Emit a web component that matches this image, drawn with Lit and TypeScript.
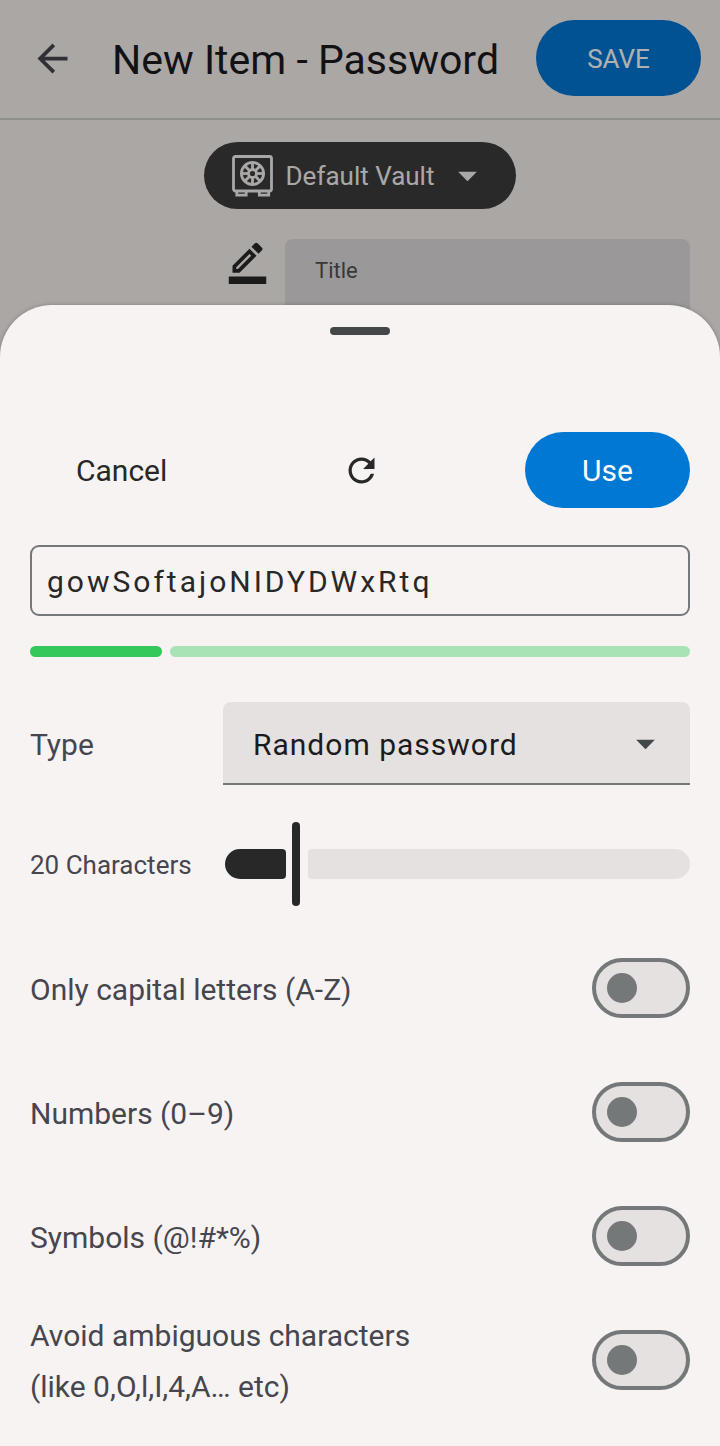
import { LitElement, html, css, svg } from "lit";
import { customElement, state } from "lit/decorators.js";

const caret = svg`<path d="M7 10l5 5 5-5z" />`;
const spokes = [0, 45, 90, 135, 180, 225, 270, 315];

interface Option {
  id: string;
  lines: string[];
}

const options: Option[] = [
  { id: "capitals", lines: ["Only capital letters (A-Z)"] },
  { id: "numbers", lines: ["Numbers (0–9)"] },
  { id: "symbols", lines: ["Symbols (@!#*%)"] },
  { id: "ambiguous", lines: ["Avoid ambiguous characters", "(like 0,O,l,I,4,A… etc)"] },
];

@customElement("new-item-page")
class NewItemPage extends LitElement {
  static styles = css`
    :host {
      display: block;
      background: #f8f2f0;
      color: #1b1b1f;
    }
    button,
    input {
      font: inherit;
      color: inherit;
      border: 0;
      margin: 0;
      padding: 0;
    }
    .bar {
      display: flex;
      align-items: center;
      height: 116px;
      padding: 0 19px 2px 30px;
      border-bottom: 2px solid #d0d1ce;
    }
    .back {
      display: flex;
      background: none;
      color: #46464f;
    }
    .icon {
      width: 45px;
      height: 45px;
      fill: currentColor;
      flex: none;
    }
    .heading {
      flex: 1;
      margin: 0;
      padding: 4px 0 0 37px;
      font-size: 41px;
      line-height: 48px;
      font-weight: 400;
      white-space: nowrap;
    }
    .save {
      width: 165px;
      height: 76px;
      border-radius: 38px;
      background: #0078d4;
      color: #fff;
      font-size: 26px;
      padding-top: 2px;
    }
    .vault {
      display: flex;
      align-items: center;
      width: fit-content;
      height: 67px;
      margin: 22px auto 30px;
      padding: 0 26px 0 28px;
      border-radius: 34px;
      background: #3c3c3c;
      color: #f7f3f1;
      font-size: 26px;
    }
    .safe {
      width: 41px;
      height: 42px;
      margin-right: 13px;
      fill: none;
      stroke: currentColor;
      stroke-width: 2.8;
    }
    .vault .icon {
      margin-left: 11px;
    }
    .row {
      display: flex;
      align-items: flex-start;
      gap: 15px;
      padding: 0 30px 0 225px;
    }
    .edit {
      color: #282828;
    }
    .title {
      flex: 1;
      min-width: 0;
      height: 105px;
      padding: 0 30px 42px;
      box-sizing: border-box;
      border-radius: 8px 8px 0 0;
      background: #e0dddd;
      font-size: 22px;
    }
    .title::placeholder {
      color: #4f5253;
      opacity: 1;
    }
  `;

  render() {
    return html`
      <header class="bar">
        <button class="back" aria-label="Back">
          <svg class="icon" viewBox="0 0 24 24">
            <path d="M20 11H7.83l5.59-5.59L12 4l-8 8 8 8 1.41-1.41L7.83 13H20v-2z" />
          </svg>
        </button>
        <h1 class="heading">New Item - Password</h1>
        <button class="save">SAVE</button>
      </header>
      <button class="vault">
        <svg class="safe" viewBox="0 0 41 42" aria-hidden="true">
          <rect x="1.5" y="1.5" width="38" height="34.5" rx="2" />
          <path d="M4.8 36v4.2h9.4V36M27.3 36v4.2h9.4V36" />
          <circle cx="20.5" cy="18.5" r="11.1" />
          <circle cx="20.5" cy="18.5" r="4" />
          ${spokes.map(
            (a) => svg`<path d="M20.5 14.5V7.5" transform="rotate(${a} 20.5 18.5)" />`
          )}
        </svg>
        Default Vault
        <svg class="icon" viewBox="0 0 24 24" aria-hidden="true">${caret}</svg>
      </button>
      <div class="row">
        <svg class="icon edit" viewBox="0 0 24 24" aria-hidden="true">
          <path
            d="M16.81 8.94l-3.75-3.75L4 14.25V18h3.75l9.06-9.06zM6 16v-.92l7.06-7.06.92.92L6.92 16H6zm13.71-9.96c.39-.39.39-1.02 0-1.41l-2.34-2.34c-.39-.39-1.02-.39-1.41 0l-1.83 1.83 3.75 3.75 1.83-1.83zM2 20h20v4H2z"
          />
        </svg>
        <input class="title" type="text" placeholder="Title" aria-label="Title" />
      </div>
    `;
  }
}

@customElement("password-sheet")
class PasswordSheet extends LitElement {
  @state() private length = 20;
  private readonly min = 8;
  private readonly max = 90;

  static styles = css`
    :host {
      display: block;
      box-sizing: border-box;
      padding: 22px 30px 24px;
      border-radius: 52px 52px 0 0;
      background: #f7f3f2;
      box-shadow: 0 0 4px rgba(0, 0, 0, 0.25);
      color: #282828;
      font-size: 30px;
    }
    button,
    input,
    select {
      font: inherit;
      color: inherit;
      border: 0;
      margin: 0;
      padding: 0;
    }
    .handle {
      width: 60px;
      height: 8px;
      margin: 0 auto 97px;
      border-radius: 4px;
      background: #444748;
    }
    .actions {
      display: grid;
      grid-template-columns: 1fr auto 1fr;
      align-items: center;
      margin-bottom: 37px;
    }
    .cancel {
      justify-self: start;
      height: 76px;
      padding: 0 46px;
      background: none;
    }
    .refresh {
      display: flex;
      padding-left: 3px;
      background: none;
    }
    .refresh svg {
      width: 39px;
      height: 39px;
      fill: currentColor;
    }
    .use {
      justify-self: end;
      width: 165px;
      height: 76px;
      border-radius: 38px;
      background: #0078d4;
      color: #fff;
    }
    .password {
      display: block;
      box-sizing: border-box;
      width: 100%;
      height: 71px;
      padding: 2px 15px 0;
      border: 2px solid #747878;
      border-radius: 9px;
      background: none;
      letter-spacing: 3px;
    }
    .strength {
      display: grid;
      grid-template-columns: 20% 1fr;
      gap: 8px;
      height: 11px;
      margin: 30px 0 45px;
    }
    .strength span {
      border-radius: 6px;
      background: #a8e3b6;
    }
    .strength .filled {
      background: #34c759;
    }
    .field {
      display: grid;
      grid-template-columns: 193px 1fr;
      align-items: center;
      color: #46464f;
    }
    .name {
      padding-top: 2px;
    }
    .picker {
      display: grid;
      align-items: center;
    }
    .picker > * {
      grid-area: 1 / 1;
    }
    .type {
      appearance: none;
      width: 100%;
      height: 83px;
      padding: 4px 30px 0;
      border-bottom: 2px solid #747878;
      border-radius: 8px 8px 0 0;
      background: #e5e1e0;
      color: #1b1b1f;
      letter-spacing: 1px;
    }
    .picker svg {
      width: 45px;
      height: 45px;
      margin-right: 22px;
      justify-self: end;
      fill: #444748;
      pointer-events: none;
    }
    .length {
      margin: 37px 0 20px;
    }
    .count {
      font-size: 26px;
    }
    .slider {
      display: grid;
      align-items: center;
      margin-left: 2px;
    }
    .slider > * {
      grid-area: 1 / 1;
    }
    .track {
      display: flex;
      gap: 22px;
      height: 30px;
    }
    .active {
      border-radius: 15px 4px 4px 15px;
      background: #282828;
    }
    .rest {
      flex: 1;
      border-radius: 4px 15px 15px 4px;
      background: #e5e1e0;
    }
    .range {
      appearance: none;
      width: 100%;
      height: 84px;
      background: none;
    }
    .range::-webkit-slider-thumb {
      appearance: none;
      width: 8px;
      height: 84px;
      border-radius: 4px;
      background: #282828;
    }
    .option {
      display: flex;
      align-items: center;
      justify-content: space-between;
      min-height: 124px;
      line-height: 51px;
      color: #46464f;
    }
    .caption {
      padding-top: 2px;
    }
    .line {
      display: block;
    }
    .switch {
      appearance: none;
      flex: none;
      display: flex;
      align-items: center;
      box-sizing: border-box;
      width: 98px;
      height: 60px;
      padding: 0 11px;
      border: 4px solid #747878;
      border-radius: 30px;
      background: #e5e1e0;
    }
    .switch::before {
      content: "";
      width: 30px;
      height: 30px;
      border-radius: 50%;
      background: #747878;
    }
    .switch:checked {
      justify-content: flex-end;
    }
  `;

  private onLength(e: Event) {
    this.length = Number((e.target as HTMLInputElement).value);
  }

  render() {
    const ratio = (this.length - this.min) / (this.max - this.min);
    return html`
      <div class="handle"></div>
      <div class="actions">
        <button class="cancel">Cancel</button>
        <button class="refresh" aria-label="Generate again">
          <svg viewBox="0 0 24 24">
            <path
              d="M17.65 6.35C16.2 4.9 14.21 4 12 4c-4.42 0-7.99 3.58-7.99 8s3.57 8 7.99 8c3.73 0 6.84-2.55 7.73-6h-2.08c-.82 2.33-3.04 4-5.65 4-3.31 0-6-2.69-6-6s2.69-6 6-6c1.66 0 3.14.69 4.22 1.78L13 11h7V4l-2.35 2.35z"
            />
          </svg>
        </button>
        <button class="use">Use</button>
      </div>
      <input
        class="password"
        type="text"
        aria-label="Generated password"
        spellcheck="false"
        .value=${"gowSoftajoNIDYDWxRtq"}
      />
      <div class="strength" role="meter" aria-label="Strength" aria-valuenow="20">
        <span class="filled"></span><span></span>
      </div>
      <div class="field">
        <label class="name" for="type">Type</label>
        <div class="picker">
          <select class="type" id="type">
            <option>Random password</option>
          </select>
          <svg viewBox="0 0 24 24" aria-hidden="true">${caret}</svg>
        </div>
      </div>
      <div class="field length">
        <label class="name count" for="length">${this.length} Characters</label>
        <div class="slider">
          <div class="track">
            <span class="active" style="width: calc((100% - 8px) * ${ratio} - 6px)"></span>
            <span class="rest"></span>
          </div>
          <input
            class="range"
            id="length"
            type="range"
            min=${this.min}
            max=${this.max}
            .value=${String(this.length)}
            @input=${this.onLength}
          />
        </div>
      </div>
      ${options.map(
        (o) => html`
          <div class="option">
            <label class="caption" for=${o.id}>
              ${o.lines.map((l) => html`<span class="line">${l}</span>`)}
            </label>
            <input class="switch" id=${o.id} type="checkbox" role="switch" />
          </div>
        `
      )}
    `;
  }
}

@customElement("app-root")
class AppRoot extends LitElement {
  static styles = css`
    :host {
      display: grid;
      min-height: 100vh;
      font-family: Roboto, "Noto Sans", sans-serif;
    }
    .page,
    .scrim,
    .sheet {
      grid-area: 1 / 1;
      min-width: 0;
    }
    .scrim {
      background: rgba(0, 0, 0, 0.31);
      z-index: 1;
    }
    .sheet {
      align-self: end;
      z-index: 2;
    }
  `;

  render() {
    return html`
      <new-item-page class="page"></new-item-page>
      <div class="scrim"></div>
      <password-sheet class="sheet"></password-sheet>
    `;
  }
}
